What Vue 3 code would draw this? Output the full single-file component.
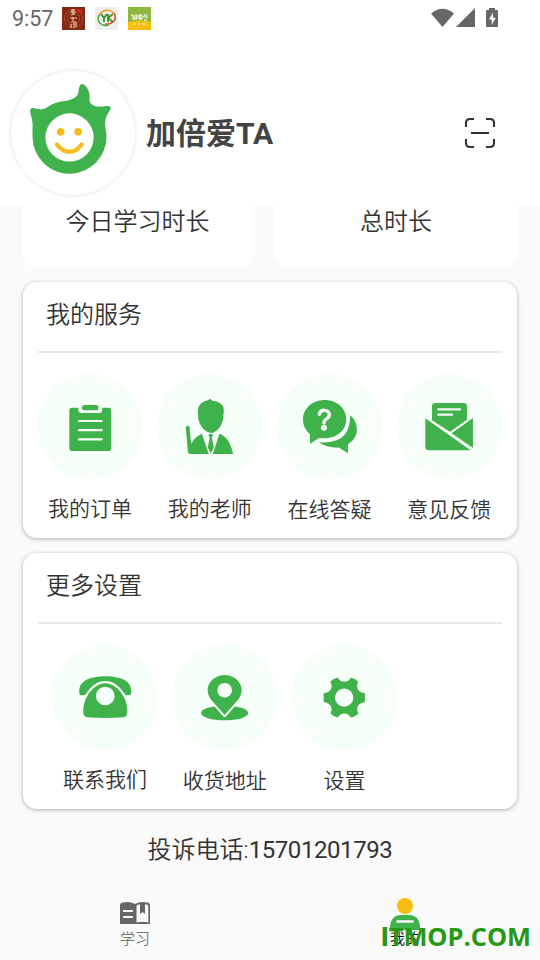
<script setup>
const services = [
  { name: 'order', label: '我的订单', box: '23 27 314 314', low: false },
  { name: 'teacher', label: '我的老师', box: '381.5 27 314 314', low: false },
  { name: 'question', label: '在线答疑', box: '21 27 314 314', low: true },
  { name: 'feedback', label: '意见反馈', box: '381 27 314 314', low: true }
]
const settings = [
  { name: 'phone', label: '联系我们', box: '68 29 314 314', low: false },
  { name: 'address', label: '收货地址', box: '426 30 314 314', low: true },
  { name: 'gear', label: '设置', box: '66 30 314 314', low: true }
]
const groups = [
  { title: '我的服务', items: services },
  { title: '更多设置', items: settings, inset: true }
]
</script>

<template>
  <div class="screen">
    <header class="top">
      <div class="status">
        <span class="clock">9:57</span>
        <svg class="app" viewBox="0 0 23 23">
          <rect width="23" height="23" fill="#852713" />
          <g fill="none" stroke="#b9683f" stroke-width="1">
            <circle cx="11.5" cy="11.5" r="9" stroke-dasharray="2 1" />
            <circle cx="11.5" cy="11.5" r="6" stroke-dasharray="1.5 1" />
          </g>
          <path d="M9 3h4M8 5h6M11 2v6M9 8l4-1M8 11h7M11 10v4M9 15h5M9 17v4M12 16v5M14 15v5" stroke="#f1d4a4" stroke-width="1.1" />
          <path d="M16 2h4v4h-4z" fill="#d62619" />
        </svg>
        <svg class="app" viewBox="0 0 23 23">
          <rect width="23" height="23" fill="#eeeeee" />
          <path d="M4 9C7 2 15 2 19 6" fill="none" stroke="#f39b23" stroke-width="1.6" />
          <path d="M19 6C23 13 17 18 10 17" fill="none" stroke="#e0482c" stroke-width="1.5" />
          <path d="M4 8C1 14 6 20 14 18" fill="none" stroke="#56ad38" stroke-width="1.5" />
          <path d="M6 7l3 4v4M12 7l-3 4M13 7v8M18 7l-5 4 5 4" fill="none" stroke="#42942d" stroke-width="1.9" />
        </svg>
        <svg class="app" viewBox="0 0 23 23">
          <rect width="23" height="23" fill="#8eb83d" />
          <path d="M0 15q12-3 23 0v8H0z" fill="#f7bf0b" />
          <path d="M3 8h2v5M6 8v4h3V8M8 7v5M11 8h3v4h-3zM12 7v6M16 7l1 2M19 7l-1 2M15 10h5M16 13h3M5 17h3M10 17h2M14 17h4" fill="none" stroke="#fff" stroke-width="1" />
        </svg>
        <svg class="signals" viewBox="0 0 68 22">
          <g fill="#666">
            <path d="M0 5.5Q11.5-4 23 5.5L11.5 19z" />
            <path d="M44 0v19H25z" />
            <path d="M58 0h6v2h2q1 0 1 1v15q0 1-1 1H56q-1 0-1-1V3q0-1 1-1h2z" />
          </g>
          <path d="M62 4.5l-4 7h2.7V17l4-7.2H62z" fill="#fff" />
        </svg>
      </div>
      <div class="profile">
        <div class="avatar">
          <svg viewBox="32 29 375 375">
            <path fill="#40b24c" d="M97 205C99 178 93 168 90 152C89 141 96 140 104 142C119 147 131 147 141 139C158 127 174 123 193 120C215 116 232 109 235 96C238 81 238 69 247 68C259 69 270 89 270 106C269 119 269 125 277 130C289 139 302 137 320 135C330 133 336 138 332 146C323 160 315 173 317 195L321 225A112 112 0 0 1 97 230Z" />
            <circle cx="209" cy="230" r="73" fill="#fff" />
            <g fill="#f7bd1b"><circle cx="182" cy="213" r="11.5" /><circle cx="235" cy="213" r="11.5" /></g>
            <path d="M171 251Q187 273 209 273T246 251" fill="none" stroke="#f7bd1b" stroke-width="13" stroke-linecap="round" />
          </svg>
        </div>
        <h1>加倍爱TA</h1>
        <svg class="scan" viewBox="0 0 32 32" fill="none" stroke="#333" stroke-width="2.1">
          <path d="M2 10V6q0-4 4-4h4M22 2h4q4 0 4 4v4M2 22v4q0 4 4 4h4M22 30h4q4 0 4-4v-4M7 16h18" />
        </svg>
      </div>
    </header>

    <main>
      <div class="times">
        <div class="time">今日学习时长</div>
        <div class="time">总时长</div>
      </div>

      <section v-for="g in groups" :key="g.title" class="card">
        <h2>{{ g.title }}</h2>
        <div class="items" :class="{ inset: g.inset }">
          <div v-for="it in g.items" :key="it.name" class="item" :class="{ low: it.low }">
            <svg class="disc" :viewBox="it.box" fill="#40b24c">
              <g v-if="it.name === 'order'">
                <path d="M125 128H144V134Q144 144 154 144H206Q216 144 216 134V128H235Q243 128 243 136V250Q243 258 235 258H125Q117 258 117 250V136Q117 128 125 128Z" />
                <rect x="155" y="120" width="50" height="16" rx="8" />
                <path d="M146 168H214M146 195.500H214M146 223.500H214" stroke="#f5fff8" stroke-width="6.500" stroke-linecap="round" />
              </g>
              <g v-else-if="it.name === 'teacher'">
                <path d="M505 151C503 134 505 122 516 113C524 107 535 107 541 101L547 107C560 108 576 114 580 124C583 133 582 143 581 151L581 158C578 181 562 203 543 204C524 202 509 181 505 160Z" />
                <path d="M468 186Q473 180 479 185L484 236Q496 215 516 206L537 267H480Q475 267 474 260Z" />
                <path d="M538 207H548L549 212 546 218 552 248 543 266 534 248 540 218 536 212Z" />
                <path d="M569 206Q600 217 610 267H549Z" />
              </g>
              <g v-else-if="it.name === 'question'">
                <path d="M120 237V208Q99 190 99 163C99 130 128 105 164 105C201 105 229 130 229 163C229 201 192 226 147 219Z" />
                <path d="M240 151Q261 166 261 194Q261 220 234 238V265L207 248Q171 249 147 232Q203 236 226 207Q243 183 240 151Z" />
                <path d="M148 148Q151 135 164 136Q179 138 178 151Q177 158 168 163Q161 168 162 174" fill="none" stroke="#f5fff8" stroke-width="10" stroke-linecap="round" />
                <circle cx="162" cy="188" r="9" fill="#f5fff8" />
              </g>
              <g v-else-if="it.name === 'feedback'">
                <path d="M486 166V124Q486 114 496 114H581Q591 114 591 124V164L540 200Z" />
                <path d="M466 160L602 256H477Q466 256 466 246Z" />
                <path d="M609 159V249L545 205Z" />
                <path d="M505 133H570M505 149H546" stroke="#f5fff8" stroke-width="7" stroke-linecap="round" />
              </g>
              <g v-else-if="it.name === 'phone'">
                <path d="M147 167C147 137 178 123 225 123S303 137 303 167V173Q302 180 294 180H290Q286 180 284 177C267 150 247 137 225 137S183 150 166 177Q164 180 160 180H155Q147 180 147 172Z" />
                <path d="M225 144C257 144 291 183 291 226V232Q291 243 281 246Q225 250 169 246Q159 243 159 232V226C159 183 193 144 225 144Z" />
                <circle cx="225" cy="182" r="28" fill="#f5fff8" />
              </g>
              <g v-else-if="it.name === 'address'">
                <ellipse cx="584" cy="234" rx="71" ry="22" />
                <path d="M584 240L545 196C514 158 548 120 584 120S654 158 623 196Z" stroke="#f5fff8" stroke-width="12" stroke-linejoin="round" paint-order="stroke" />
                <circle cx="584" cy="166" r="22" fill="#f5fff8" />
              </g>
              <g v-else>
                <path d="M181 140Q190 129 204 128Q209 140 223 140T242 128Q256 130 265 140Q259 149 263 162Q270 173 285 175V201Q269 204 263 214Q259 224 265 236Q256 247 242 248Q236 236 223 236T204 248Q190 246 182 236Q188 225 183 214Q176 203 161 201V175Q177 173 183 162Q188 151 181 140Z" />
                <circle cx="222.500" cy="188" r="27.500" fill="#f5fff8" />
              </g>
            </svg>
            <span>{{ it.label }}</span>
          </div>
        </div>
      </section>
      <p class="hotline">投诉电话:<span>15701201793</span></p>
    </main>

    <nav>
      <div class="tab">
        <svg class="book" viewBox="0 0 30 23">
          <path d="M0 3Q0 1 3 .5Q10-1 15 2Q20-1 27 .5Q30 1 30 3V22H0z" fill="#666" />
          <path d="M16.500 4Q17.500 2.500 20 2.200V12l2.500-2 2.500 2V2.200Q28 2.500 28.300 4V20.500Q22 19 16.500 20.500zM3 8H13V10H3zM3 14H13V16H3z" fill="#fafafa" />
        </svg>
        <span>学习</span>
      </div>
      <div class="tab active">
        <svg class="me" viewBox="0 0 30 32">
          <circle cx="15" cy="8" r="8" fill="#f7bd12" />
          <path d="M0 32V29Q1 17 11 17H19Q29 17 30 29V32z" fill="#40b24c" />
          <path d="M7.500 23.500H22.500" stroke="#fff" stroke-width="2.500" stroke-linecap="round" />
        </svg>
        <span>我的</span>
      </div>
    </nav>
    <div class="watermark"><span>I</span>TMOP.COM</div>
  </div>
</template>

<style>
body { margin: 0; background: #fafafa; }
</style>

<style scoped>
.screen { position: relative; display: flex; flex-direction: column; width: 540px; height: 960px; overflow: hidden; background: #fafafa; color: #333; font-family: Roboto, "Noto Sans CJK SC", sans-serif; font-weight: 350; }
.top { height: 206px; background: #fff; flex: none; }
.status { display: flex; align-items: center; height: 37px; padding: 0 41px 0 12px; }
.clock { width: 50px; font-size: 21.500px; font-weight: 400; line-height: 37px; color: #666; }
.app { width: 23px; height: 23px; margin-right: 10px; }
.signals { width: 68px; height: 22px; margin-left: auto; margin-top: 1px; }
.profile { display: flex; align-items: center; height: 124px; padding: 34px 44px 0 11px; }
.avatar { width: 124px; height: 124px; border-radius: 50%; box-shadow: 0 0 4px rgba(0, 0, 0, .13); }
.avatar svg { display: block; width: 124px; height: 124px; }
h1 { margin: 2px 0 0 11px; font-size: 30px; line-height: 44px; font-weight: 700; color: #444; }
.scan { width: 32px; height: 32px; margin-left: auto; margin-top: 0; }
main { flex: 1; }
.times { display: grid; grid-template-columns: 229px 242px; gap: 23px; padding: 0 23px; }
.time { height: 61px; border-radius: 0 0 14px 14px; background: #fff; text-align: center; font-size: 24px; line-height: 33px; }
.card { height: 256px; margin: 15px 23px 0; border-radius: 14px; background: #fff; box-shadow: 0 1px 4px rgba(0, 0, 0, .3); }
h2 { margin: 0 15px; padding-left: 8px; height: 69px; border-bottom: 2px solid #e8e8e8; font-size: 24px; font-weight: inherit; line-height: 67px; }
.items { display: flex; gap: 15.200px; padding: 21px 0 0 14.700px; }
.items.inset { padding-left: 29.700px; }
.item { display: flex; flex-direction: column; align-items: center; width: 104.600px; }
.disc { width: 104.600px; height: 104.600px; border-radius: 50%; background: #f5fff8; }
.item span { font-size: 21px; line-height: 30px; margin-top: 15px; white-space: nowrap; }
.item.low span { margin-top: 16px; }
.hotline { margin: 25px 0 0; text-align: center; font-size: 24px; line-height: 32px; }
.hotline span { font-weight: 400; letter-spacing: -.42px; }
nav { display: flex; height: 70px; flex: none; }
.tab { width: 270px; display: flex; flex-direction: column; align-items: center; font-size: 15px; line-height: 20px; color: #777; }
.tab svg { flex: none; }
.book { width: 30px; height: 23px; margin-top: 12px; }
.me { width: 30px; height: 32px; margin-top: 8px; }
.tab span { margin-top: 4px; }
.active span { margin-top: -1px; color: #111; }
.watermark { position: absolute; left: 381px; top: 919px; font: 700 25.400px/34px "Open Sans", sans-serif; color: #279816; white-space: nowrap; }
.watermark span { font-family: Roboto, sans-serif; font-weight: 900; }
</style>
